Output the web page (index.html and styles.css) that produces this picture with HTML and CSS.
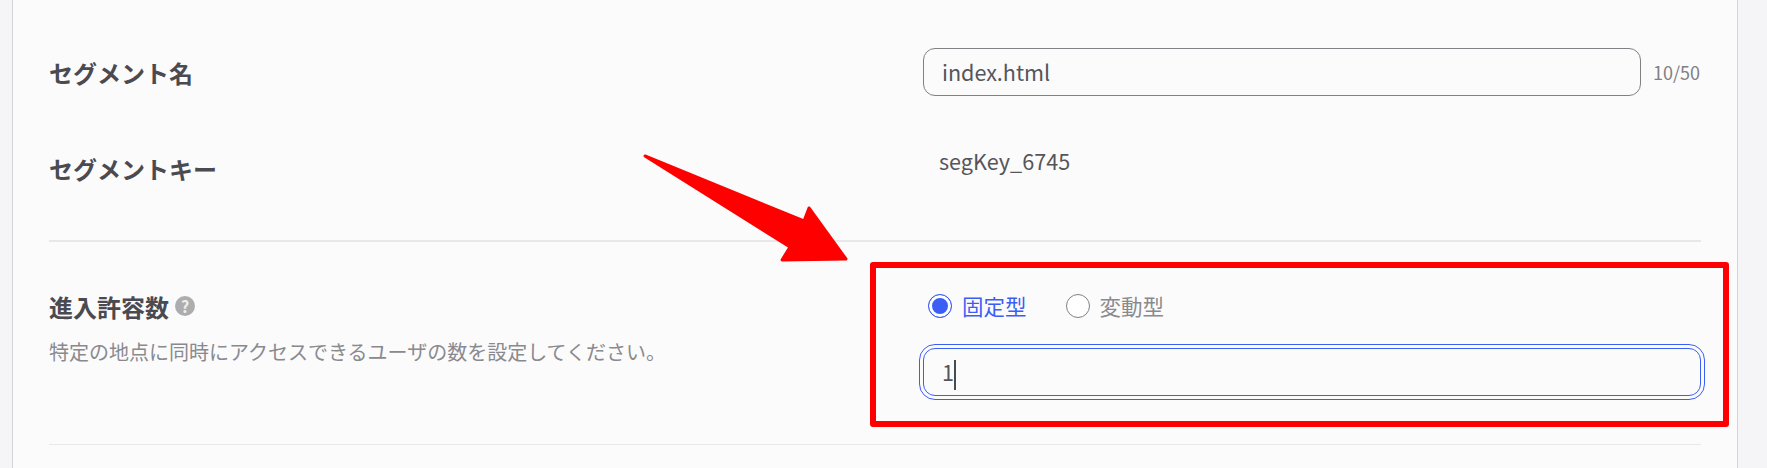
FILE: index.html
```html
<!DOCTYPE html>
<html lang="ja">
<head>
    <meta charset="UTF-8">
    <meta name="viewport" content="width=device-width, initial-scale=1.0">
    <title>セグメント設定</title>
    <link rel="stylesheet" href="styles.css">
</head>
<body>
    <div class="panel">
        <section class="group group-basic">
            <div class="row row-name">
                <div class="label">セグメント名</div>
                <div class="control with-count">
                    <div class="field">index.html</div>
                    <span class="count">10/50</span>
                </div>
            </div>
            <div class="row row-key">
                <div class="label">セグメントキー</div>
                <div class="key-value">segKey_6745</div>
            </div>
        </section>

        <section class="group group-limit">
            <div class="row">
                <div class="limit-text">
                    <div class="label label-help">進入許容数<span class="help">?</span></div>
                    <p class="desc">特定の地点に同時にアクセスできるユーザの数を設定してください。</p>
                </div>
                <div class="control-stack">
                    <div class="radios">
                        <div class="radio radio-on"><span class="dot"></span>固定型</div>
                        <div class="radio"><span class="dot"></span>変動型</div>
                    </div>
                    <div class="field field-focus">1<span class="caret"></span></div>
                </div>
            </div>
        </section>
    </div>

    <!-- annotation on top of the screenshot -->
    <div class="mark-box"></div>
    <svg class="mark-arrow" width="1767" height="468" viewBox="0 0 1767 468">
        <polygon points="645,156 804,221 809,208 846,259 782,260 790,247" fill="#ff0000" stroke="#ff0000" stroke-width="3" stroke-linejoin="round"/>
    </svg>
</body>
</html>
```

FILE: styles.css
```css
html, body {
    margin: 0;
    height: 468px;
    overflow: hidden;
}
body {
    position: relative;
    background-color: #f5f5f7;
    font-family: "Noto Sans CJK JP", "Noto Sans", sans-serif;
    color: #55555b;
}
.panel {
    box-sizing: border-box;
    width: 1726px;
    height: 468px;
    margin-left: 12px;
    padding: 0 36px;
    background-color: #fbfbfc;
    border-left: 1px solid #d4d4d8;
    border-right: 1px solid #d4d4d8;
}
.group-basic {
    height: 242px;
    padding-top: 48px;
    box-sizing: border-box;
    border-bottom: 2px solid #e8e8e8;
}
.group-limit {
    height: 203px;
    padding-top: 52px;
    box-sizing: border-box;
    border-bottom: 1px solid #e8e8e8;
}
.row {
    display: grid;
    grid-template-columns: 874px 1fr;
}
.row-name {
    height: 48px;
    align-items: center;
}
.row-key {
    margin-top: 49px;
}
.label {
    font-size: 24px;
    font-weight: 700;
    line-height: 32px;
    color: #4a4a50;
}
.row-name .label {
    padding-top: 1px;
}
.row-key .label {
    padding-top: 8px;
}
.limit-text {
    margin-top: -3px;
}
.label-help {
    display: flex;
    align-items: center;
    gap: 6px;
}
.help {
    width: 20px;
    height: 20px;
    margin-top: -2px;
    border-radius: 50%;
    background-color: #adadb0;
    color: #eeeeee;
    font-size: 16px;
    font-weight: 700;
    line-height: 20px;
    text-align: center;
}
.desc {
    margin: 15px 0 0;
    font-size: 20px;
    line-height: 28px;
    color: #8a8a8e;
}
.with-count {
    display: flex;
    align-items: center;
    gap: 12px;
}
.field {
    box-sizing: border-box;
    width: 718px;
    height: 48px;
    padding: 0 18px;
    border: 1px solid #808085;
    border-radius: 12px;
    font-size: 21.6px;
    line-height: 46px;
}
.count {
    font-size: 18px;
    color: #808085;
}
.key-value {
    padding-left: 16px;
    font-size: 21.6px;
    line-height: 32px;
}
.radios {
    display: flex;
    gap: 39px;
    height: 24px;
    margin-bottom: 30px;
    padding-left: 5px;
}
.radio {
    display: flex;
    align-items: center;
    gap: 10px;
    font-size: 21.5px;
    line-height: 24px;
    color: #8a8a8e;
}
.dot {
    box-sizing: border-box;
    width: 24px;
    height: 24px;
    border: 1.5px solid #808085;
    border-radius: 50%;
    background-color: #fff;
}
.radio-on {
    color: #3b5ef5;
}
.radio-on .dot {
    border-color: #3b5ef5;
    background-color: #3b5ef5;
    box-shadow: inset 0 0 0 3px #fff;
}
.field-focus {
    width: 778px;
    border-color: #3b5ef5;
    outline: 1px solid #3b5ef5;
    outline-offset: 3px;
}
.caret {
    display: inline-block;
    width: 1.5px;
    height: 30px;
    vertical-align: middle;
    background-color: #4a4a50;
}
.mark-box {
    position: absolute;
    left: 870px;
    top: 262px;
    box-sizing: border-box;
    width: 859px;
    height: 165px;
    border: 6px solid #ff0000;
    border-radius: 3px;
}
.mark-arrow {
    position: absolute;
    left: 0;
    top: 0;
}
```
